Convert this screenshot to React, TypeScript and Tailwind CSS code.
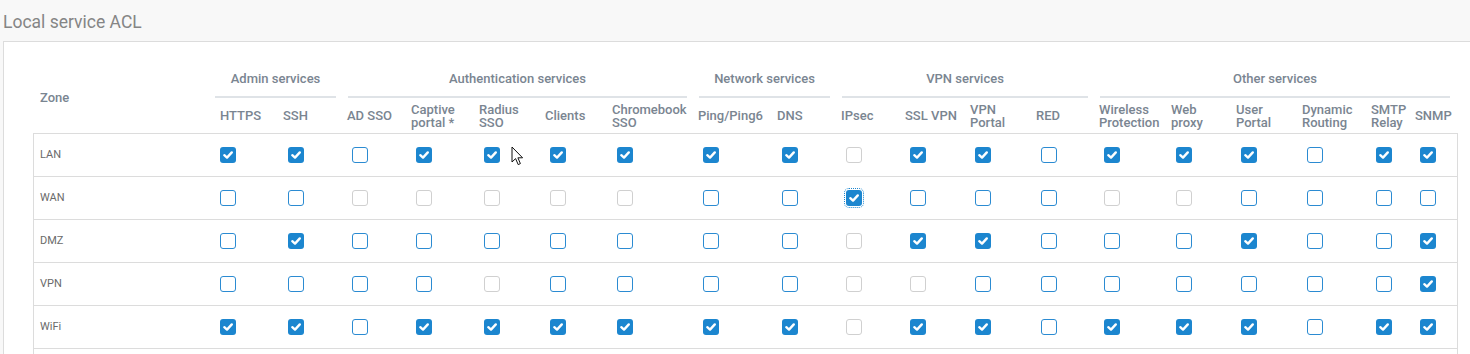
import React from 'react'

type Col = { label: string[]; first?: boolean }

const groups = [
  { label: 'Admin services', span: 'col-span-2', pad: 'pl-[9px] pr-[3px]' },
  { label: 'Authentication services', span: 'col-span-5', pad: 'pl-[9px] pr-[3px]' },
  { label: 'Network services', span: 'col-span-2', pad: 'pl-[9px] pr-[3px]' },
  { label: 'VPN services', span: 'col-span-4', pad: 'pl-[9px] pr-[3px]' },
  { label: 'Other services', span: 'col-span-6', pad: 'pl-[9px] pr-[8px]' },
]

const cols: Col[] = [
  { label: ['HTTPS'], first: true },
  { label: ['SSH'] },
  { label: ['AD SSO'] },
  { label: ['Captive', 'portal *'] },
  { label: ['Radius', 'SSO'] },
  { label: ['Clients'] },
  { label: ['Chromebook', 'SSO'] },
  { label: ['Ping/Ping6'] },
  { label: ['DNS'] },
  { label: ['IPsec'] },
  { label: ['SSL VPN'] },
  { label: ['VPN', 'Portal'] },
  { label: ['RED'] },
  { label: ['Wireless', 'Protection'] },
  { label: ['Web', 'proxy'] },
  { label: ['User', 'Portal'] },
  { label: ['Dynamic', 'Routing'] },
  { label: ['SMTP', 'Relay'] },
  { label: ['SNMP'] },
]

// c = checked, u = unchecked, d = disabled, f = checked + focused
const zones = [
  { name: 'LAN', state: 'ccuccccccdccucccucc' },
  { name: 'WAN', state: 'uuddddduufuuudduuuu' },
  { name: 'DMZ', state: 'ucuuuuuuudccuuucuuc' },
  { name: 'VPN', state: 'uuuuduuuudduuuuuuuc' },
  { name: 'WiFi', state: 'ccuccccccdccucccucc' },
]

const grid =
  'grid grid-cols-[173px_69px_64px_64px_68px_66px_67px_86px_79px_64px_64px_65px_66px_63px_72px_65px_66px_69px_44px_51px]'

function Box({ s }: { s: string }) {
  if (s === 'c' || s === 'f') {
    return (
      <span
        className={`flex h-4 w-4 items-center justify-center rounded-[3px] bg-[#1c86cf] ${
          s === 'f' ? 'outline-1 outline-dotted outline-offset-1 outline-[#1c86cf]' : ''
        }`}
      >
        <svg width="12" height="12" viewBox="0 0 12 12">
          <path d="M2.3 6.2 L5 8.6 L9.8 3.4" fill="none" stroke="#fff" strokeWidth="2.4" strokeLinecap="round" strokeLinejoin="round" />
        </svg>
      </span>
    )
  }
  if (s === 'd') {
    return <span className="block h-4 w-4 rounded-[3px] border-[1.5px] border-[#d0d0d0] bg-white" />
  }
  return <span className="block h-4 w-4 rounded-[3px] border-[1.5px] border-[#2b8bd2] bg-white" />
}

export default function App() {
  return (
    <div className="relative h-[354px] w-[1470px] overflow-hidden bg-[#f8f8f8] font-['Roboto',sans-serif]">
      <div className="h-[41px] pl-[3px] pt-[12px] text-[17.5px] leading-5 text-[#858585]">Local service ACL</div>

      <div className="ml-[3px] border-l border-t border-[#dcdcdc] bg-white pl-[29px] pt-[21px]">
        {/* header */}
        <div className={`${grid} text-[13px] font-medium text-[#7a8591]`}>
          <div className="row-span-2 flex items-center pl-[7px]">Zone</div>
          {groups.map((g) => (
            <div key={g.label} className={`${g.span} ${g.pad} flex h-[35px] flex-col justify-end`}>
              <div className="border-b-2 border-[#dfe3e7] pb-[10px] text-center leading-[15px]">{g.label}</div>
            </div>
          ))}
          {cols.map((c) => (
            <div
              key={c.label.join(' ')}
              className={`flex h-[35px] flex-col justify-center leading-[13px] ${c.first ? 'pl-[14px]' : 'pl-2'}`}
            >
              {c.label.map((l) => (
                <span key={l} className="whitespace-nowrap">
                  {l}
                </span>
              ))}
            </div>
          ))}
        </div>

        {/* body */}
        <div className="w-[1425px] border-l border-r border-t border-[#dcdcdc]">
          {zones.map((z) => (
            <div key={z.name} className={`${grid} h-[43px] border-b border-[#dcdcdc]`}>
              <div className="flex items-center pl-[6px] text-[11px] text-[#6a6a6a]">{z.name}</div>
              {z.state.split('').map((s, i) => (
                <div key={i} className={`flex items-center ${i === 0 ? 'pl-[13px]' : 'pl-[12px]'}`}>
                  <Box s={s} />
                </div>
              ))}
            </div>
          ))}
          <div className="h-[20px]" />
        </div>
      </div>

      {/* mouse pointer */}
      <svg className="absolute left-[511px] top-[146px]" width="14" height="21" viewBox="0 0 14 21">
        <path d="M1 1 L1 16 L4.6 12.6 L7.2 18.6 L9.4 17.6 L6.9 11.8 L11.6 11.8 Z" fill="#fff" stroke="#111" strokeWidth="1" strokeLinejoin="round" />
      </svg>
    </div>
  )
}
